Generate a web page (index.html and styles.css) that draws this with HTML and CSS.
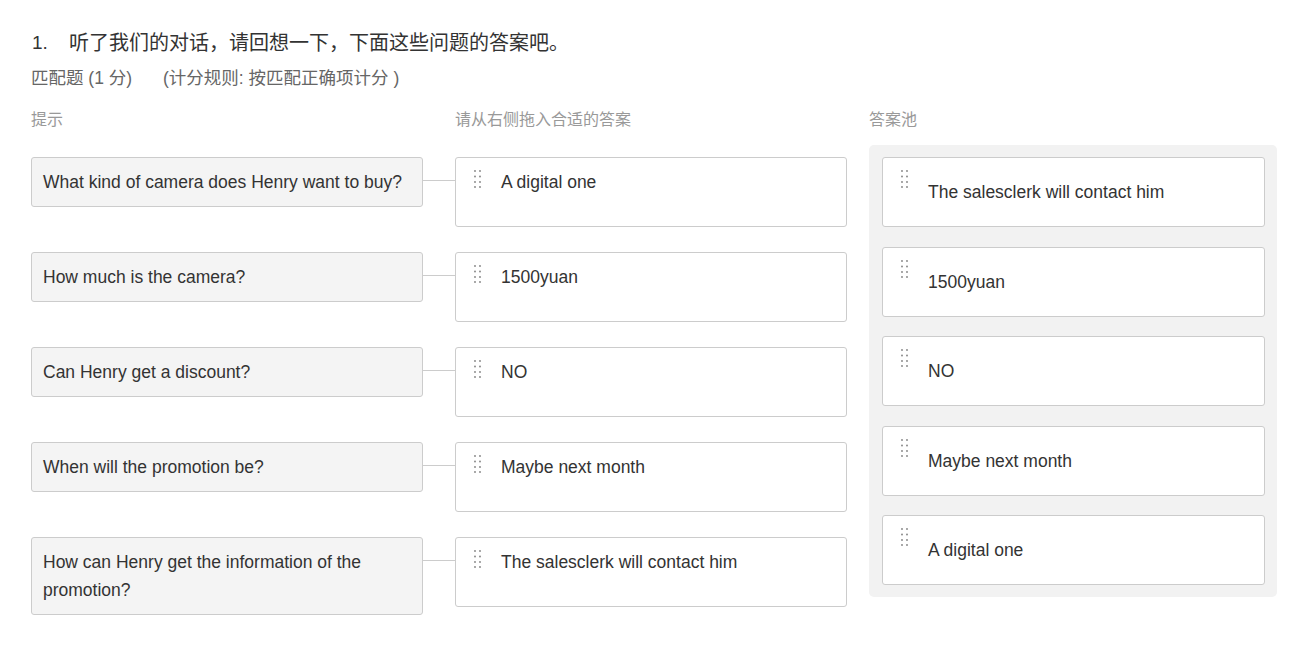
FILE: index.html
```html
<!DOCTYPE html>
<html lang="zh-CN">
<head>
<meta charset="utf-8">
<title>匹配题</title>
<link rel="stylesheet" href="styles.css">
</head>
<body>
<div class="page">
  <div class="title"><span class="num">1.</span><span>听了我们的对话，请回想一下，下面这些问题的答案吧。</span></div>
  <div class="meta"><span class="type">匹配题 (1 分)</span><span class="rule">(计分规则: 按匹配正确项计分 )</span></div>

  <div class="board">
    <div class="match">
      <div class="labels">
        <div class="label col-prompt">提示</div>
        <div class="label col-slot">请从右侧拖入合适的答案</div>
      </div>
      <div class="rows">
        <div class="row">
          <div class="prompt">What kind of camera does Henry want to buy?</div>
          <div class="link"></div>
          <div class="slot card"><svg class="handle" width="7" height="18" viewBox="0 0 7 18"><g fill="#808080"><circle cx="1" cy="1" r="0.9"/><circle cx="6" cy="1" r="0.9"/><circle cx="1" cy="6.5" r="0.9"/><circle cx="6" cy="6.5" r="0.9"/><circle cx="1" cy="12" r="0.9"/><circle cx="6" cy="12" r="0.9"/><circle cx="1" cy="17" r="0.9"/><circle cx="6" cy="17" r="0.9"/></g></svg><span class="txt">A digital one</span></div>
        </div>
        <div class="row">
          <div class="prompt">How much is the camera?</div>
          <div class="link"></div>
          <div class="slot card"><svg class="handle" width="7" height="18" viewBox="0 0 7 18"><g fill="#808080"><circle cx="1" cy="1" r="0.9"/><circle cx="6" cy="1" r="0.9"/><circle cx="1" cy="6.5" r="0.9"/><circle cx="6" cy="6.5" r="0.9"/><circle cx="1" cy="12" r="0.9"/><circle cx="6" cy="12" r="0.9"/><circle cx="1" cy="17" r="0.9"/><circle cx="6" cy="17" r="0.9"/></g></svg><span class="txt">1500yuan</span></div>
        </div>
        <div class="row">
          <div class="prompt">Can Henry get a discount?</div>
          <div class="link"></div>
          <div class="slot card"><svg class="handle" width="7" height="18" viewBox="0 0 7 18"><g fill="#808080"><circle cx="1" cy="1" r="0.9"/><circle cx="6" cy="1" r="0.9"/><circle cx="1" cy="6.5" r="0.9"/><circle cx="6" cy="6.5" r="0.9"/><circle cx="1" cy="12" r="0.9"/><circle cx="6" cy="12" r="0.9"/><circle cx="1" cy="17" r="0.9"/><circle cx="6" cy="17" r="0.9"/></g></svg><span class="txt">NO</span></div>
        </div>
        <div class="row">
          <div class="prompt">When will the promotion be?</div>
          <div class="link"></div>
          <div class="slot card"><svg class="handle" width="7" height="18" viewBox="0 0 7 18"><g fill="#808080"><circle cx="1" cy="1" r="0.9"/><circle cx="6" cy="1" r="0.9"/><circle cx="1" cy="6.5" r="0.9"/><circle cx="6" cy="6.5" r="0.9"/><circle cx="1" cy="12" r="0.9"/><circle cx="6" cy="12" r="0.9"/><circle cx="1" cy="17" r="0.9"/><circle cx="6" cy="17" r="0.9"/></g></svg><span class="txt">Maybe next month</span></div>
        </div>
        <div class="row">
          <div class="prompt">How can Henry get the information of the promotion?</div>
          <div class="link"></div>
          <div class="slot card"><svg class="handle" width="7" height="18" viewBox="0 0 7 18"><g fill="#808080"><circle cx="1" cy="1" r="0.9"/><circle cx="6" cy="1" r="0.9"/><circle cx="1" cy="6.5" r="0.9"/><circle cx="6" cy="6.5" r="0.9"/><circle cx="1" cy="12" r="0.9"/><circle cx="6" cy="12" r="0.9"/><circle cx="1" cy="17" r="0.9"/><circle cx="6" cy="17" r="0.9"/></g></svg><span class="txt">The salesclerk will contact him</span></div>
        </div>
      </div>
    </div>

    <div class="pool-col">
      <div class="label pool-label">答案池</div>
      <div class="pool">
        <div class="pool-card card"><svg class="handle" width="7" height="18" viewBox="0 0 7 18"><g fill="#808080"><circle cx="1" cy="1" r="0.9"/><circle cx="6" cy="1" r="0.9"/><circle cx="1" cy="6.5" r="0.9"/><circle cx="6" cy="6.5" r="0.9"/><circle cx="1" cy="12" r="0.9"/><circle cx="6" cy="12" r="0.9"/><circle cx="1" cy="17" r="0.9"/><circle cx="6" cy="17" r="0.9"/></g></svg><span class="txt">The salesclerk will contact him</span></div>
        <div class="pool-card card"><svg class="handle" width="7" height="18" viewBox="0 0 7 18"><g fill="#808080"><circle cx="1" cy="1" r="0.9"/><circle cx="6" cy="1" r="0.9"/><circle cx="1" cy="6.5" r="0.9"/><circle cx="6" cy="6.5" r="0.9"/><circle cx="1" cy="12" r="0.9"/><circle cx="6" cy="12" r="0.9"/><circle cx="1" cy="17" r="0.9"/><circle cx="6" cy="17" r="0.9"/></g></svg><span class="txt">1500yuan</span></div>
        <div class="pool-card card"><svg class="handle" width="7" height="18" viewBox="0 0 7 18"><g fill="#808080"><circle cx="1" cy="1" r="0.9"/><circle cx="6" cy="1" r="0.9"/><circle cx="1" cy="6.5" r="0.9"/><circle cx="6" cy="6.5" r="0.9"/><circle cx="1" cy="12" r="0.9"/><circle cx="6" cy="12" r="0.9"/><circle cx="1" cy="17" r="0.9"/><circle cx="6" cy="17" r="0.9"/></g></svg><span class="txt">NO</span></div>
        <div class="pool-card card"><svg class="handle" width="7" height="18" viewBox="0 0 7 18"><g fill="#808080"><circle cx="1" cy="1" r="0.9"/><circle cx="6" cy="1" r="0.9"/><circle cx="1" cy="6.5" r="0.9"/><circle cx="6" cy="6.5" r="0.9"/><circle cx="1" cy="12" r="0.9"/><circle cx="6" cy="12" r="0.9"/><circle cx="1" cy="17" r="0.9"/><circle cx="6" cy="17" r="0.9"/></g></svg><span class="txt">Maybe next month</span></div>
        <div class="pool-card card"><svg class="handle" width="7" height="18" viewBox="0 0 7 18"><g fill="#808080"><circle cx="1" cy="1" r="0.9"/><circle cx="6" cy="1" r="0.9"/><circle cx="1" cy="6.5" r="0.9"/><circle cx="6" cy="6.5" r="0.9"/><circle cx="1" cy="12" r="0.9"/><circle cx="6" cy="12" r="0.9"/><circle cx="1" cy="17" r="0.9"/><circle cx="6" cy="17" r="0.9"/></g></svg><span class="txt">A digital one</span></div>
      </div>
    </div>
  </div>
</div>
</body>
</html>
```
FILE: styles.css
```css
* { box-sizing: border-box; }
html, body { margin: 0; padding: 0; background: #fff; }
body {
  font-family: "Liberation Sans", Arial, "Noto Sans CJK SC", sans-serif;
  color: #333;
}
.page {
  padding: 31px 20px 30px 31px;
}
.title {
  font-size: 20px;
  line-height: 24px;
  color: #333;
  display: flex;
}
.title .num {
  width: 38px;
  font-size: 19px;
  padding-left: 1px;
}
.meta {
  margin-top: 11px;
  font-size: 17.5px;
  line-height: 24px;
  color: #666;
  display: flex;
}
.meta .type { width: 132px; }
.board {
  margin-top: 19px;
  display: flex;
  align-items: flex-start;
  gap: 22px;
}
.match { width: 816px; }
.labels { display: flex; }
.label {
  font-size: 16px;
  line-height: 22px;
  color: #999;
}
.col-prompt { width: 424px; }
.labels { margin-bottom: 26px; }
.rows {
  display: flex;
  flex-direction: column;
  gap: 25px;
}
.row {
  display: flex;
  align-items: flex-start;
}
.prompt {
  width: 392px;
  min-height: 50px;
  background: #f4f4f4;
  border: 1px solid #ccc;
  border-radius: 3px;
  padding: 10px 11px 10px 11px;
  font-size: 17.5px;
  line-height: 28px;
  color: #333;
}
.link {
  width: 32px;
  height: 1px;
  margin-top: 23px;
  background: #ccc;
}
.card {
  background: #fff;
  border: 1px solid #ccc;
  border-radius: 3px;
  display: flex;
  align-items: flex-start;
  padding-left: 18px;
  font-size: 17.5px;
  line-height: 28px;
  color: #333;
}
.handle {
  flex: none;
  margin-top: 12px;
  margin-right: 20px;
}
.slot {
  width: 392px;
  height: 70px;
}
.slot .txt { margin-top: 10px; }
.pool-col { width: 409px; }
.pool-label { margin-bottom: 14px; }
.pool {
  background: #f2f2f2;
  border-radius: 5px;
  padding: 12px 12px 12px 13px;
  display: flex;
  flex-direction: column;
  gap: 19.5px;
}
.pool-card { height: 70px; }
.pool-card .txt { margin-top: 20px; }
```
